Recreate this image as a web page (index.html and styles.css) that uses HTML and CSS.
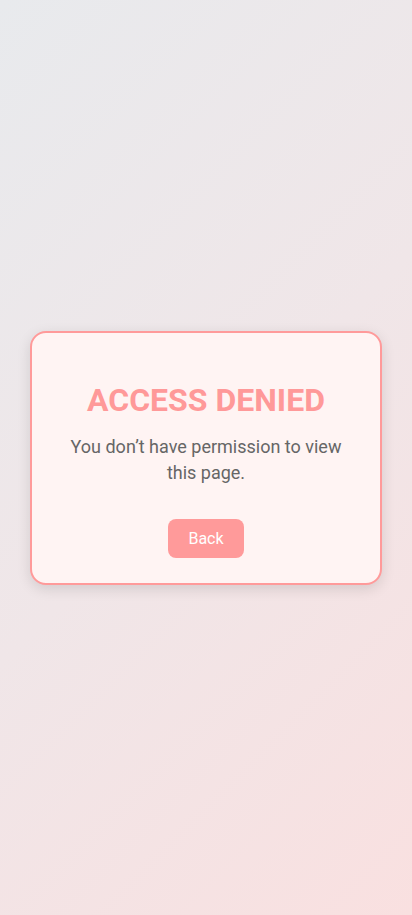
FILE: index.html
```html
<!DOCTYPE html>
<html lang="en">
<head>
<meta charset="utf-8">
<meta name="viewport" content="width=device-width, initial-scale=1">
<title>Access Denied</title>
<link rel="stylesheet" href="styles.css">
</head>
<body>
  <main class="page">
    <section class="card">
      <h1 class="title">ACCESS DENIED</h1>
      <p class="message">You don’t have permission to view this page.</p>
      <button class="back" type="button">Back</button>
    </section>
  </main>
</body>
</html>
```
FILE: styles.css
```css
* { box-sizing: border-box; }
html, body { margin: 0; padding: 0; height: 100%; }
body {
  font-family: Roboto, "Liberation Sans", sans-serif;
  background: linear-gradient(135deg, #e8eaed 0%, #f0e6e8 50%, #f9e0e0 100%);
  min-height: 915px;
}
.page {
  min-height: 915px;
  display: flex;
  align-items: center;
  justify-content: center;
  padding: 0 30px;
}
.card {
  width: 100%;
  background: #fff4f3;
  border: 2px solid #ff9a9a;
  border-radius: 16px;
  box-shadow: 0 4px 14px rgba(0, 0, 0, 0.12);
  padding: 24px 30px 25px;
  display: flex;
  flex-direction: column;
  align-items: center;
  text-align: center;
}
.title {
  margin: 24px 0 15px;
  font-size: 32px;
  line-height: 38px;
  font-weight: 700;
  letter-spacing: 0;
  color: #ff9999;
}
.message {
  margin: 0 0 33px;
  font-size: 18px;
  line-height: 26px;
  color: #666666;
}
.back {
  font-family: inherit;
  font-size: 16px;
  line-height: 19px;
  padding: 10px 20px;
  border: none;
  border-radius: 8px;
  background: #ff9a9a;
  color: #ffffff;
  cursor: pointer;
}
```
